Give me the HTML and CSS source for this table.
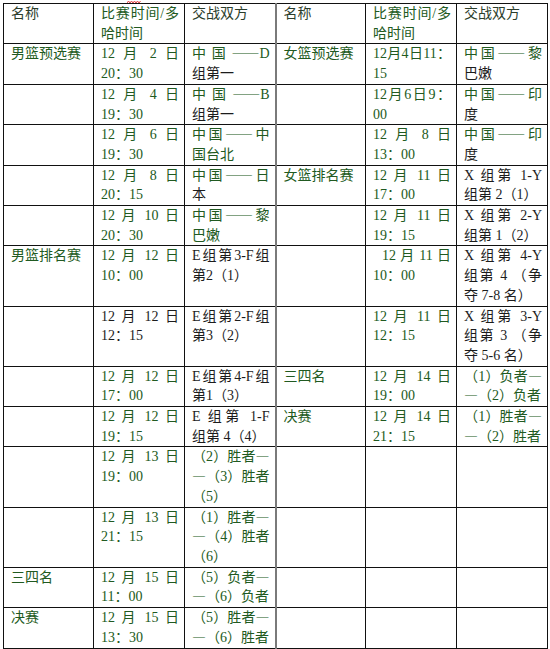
FILE: index.html
```html
<!DOCTYPE html>
<html lang="zh-CN">
<head>
<meta charset="utf-8">
<title>赛程表</title>
<link rel="stylesheet" href="styles.css">
</head>
<body>
<svg class="squiggle" width="14" height="4" viewBox="0 0 14 4"><polyline points="0,3 1.5,1 3,3 4.5,1 6,3 7.5,1 9,3 10.5,1 12,3 13.5,1" fill="none" stroke="#e03030" stroke-width="0.9"/></svg>
<table class="sched">
<colgroup><col class="cw90"><col class="cw91"><col class="cw91"><col class="cw90"><col class="cw91"><col class="cw91"></colgroup>
<tr class="hd">
<td>名称</td><td class="g">比赛时间/多哈时间</td><td>交战双方</td>
<td class="mid">名称</td><td class="g">比赛时间/多哈时间</td><td>交战双方</td>
</tr>
<tr>
<td class="g">男篮预选赛</td><td class="g">12 月 2 日 20：30</td><td><span class="g">中国<span class="d">——</span>D</span>组第一</td>
<td class="mid g">女篮预选赛</td><td class="g">12月4日11：15</td><td><span class="g">中国<span class="d">——</span>黎</span>巴嫩</td>
</tr>
<tr>
<td></td><td class="g">12 月 4 日 19：30</td><td><span class="g">中国<span class="d">——</span>B</span>组第一</td>
<td class="mid"></td><td class="g">12月6日9：00</td><td><span class="g">中国<span class="d">——</span>印</span>度</td>
</tr>
<tr>
<td></td><td class="g">12 月 6 日 19：30</td><td class="g">中国<span class="d">——</span>中国台北</td>
<td class="mid"></td><td class="g">12 月 8 日 13：00</td><td><span class="g">中国<span class="d">——</span>印</span>度</td>
</tr>
<tr>
<td></td><td class="g">12 月 8 日 20：15</td><td><span class="g">中国<span class="d">——</span>日</span>本</td>
<td class="mid g">女篮排名赛</td><td class="g">12 月 11 日 17：00</td><td>X 组第 1-Y 组第 2（1）</td>
</tr>
<tr>
<td></td><td class="g">12 月 10 日 20：30</td><td class="g">中国<span class="d">——</span>黎巴嫩</td>
<td class="mid"></td><td class="g">12 月 11 日 19：15</td><td>X 组第 2-Y 组第 1（2）</td>
</tr>
<tr>
<td class="g">男篮排名赛</td><td class="g">12 月 12 日 10：00</td><td>E组第3-F组第2（1）</td>
<td class="mid"></td><td class="g indent">12 月 11 日 10：00</td><td>X 组第 4-Y 组第 4 （争夺 7-8 名）</td>
</tr>
<tr>
<td></td><td>12 月 12 日 12：15</td><td>E组第2-F组第3（2）</td>
<td class="mid"></td><td class="g">12 月 11 日 12：15</td><td>X 组第 3-Y 组第 3 （争夺 5-6 名）</td>
</tr>
<tr>
<td></td><td class="g">12 月 12 日 17：00</td><td>E组第4-F组第1（3）</td>
<td class="mid g">三四名</td><td class="g">12 月 14 日 19：00</td><td class="g">（1）负者<span class="d">—<wbr>—</span>（2）负者</td>
</tr>
<tr>
<td></td><td class="g">12 月 12 日 19：15</td><td>E 组第 1-F 组第 4（4）</td>
<td class="mid g">决赛</td><td class="g">12 月 14 日 21：15</td><td class="g">（1）胜者<span class="d">—<wbr>—</span>（2）胜者</td>
</tr>
<tr>
<td></td><td class="g">12 月 13 日 19：00</td><td class="g">（2）胜者<span class="d">—<wbr>—</span>（3）胜者（5）</td>
<td class="mid"></td><td></td><td></td>
</tr>
<tr>
<td></td><td class="g">12 月 13 日 21：15</td><td class="g">（1）胜者<span class="d">—<wbr>—</span>（4）胜者（6）</td>
<td class="mid"></td><td></td><td></td>
</tr>
<tr>
<td class="g">三四名</td><td class="g">12 月 15 日 11：00</td><td class="g">（5）负者<span class="d">—<wbr>—</span>（6）负者</td>
<td class="mid"></td><td></td><td></td>
</tr>
<tr>
<td class="g">决赛</td><td class="g">12 月 15 日 13：30</td><td class="g">（5）胜者<span class="d">—<wbr>—</span>（6）胜者</td>
<td class="mid"></td><td></td><td></td>
</tr>
</table>
</body>
</html>
```

FILE: styles.css
```css
html, body {
  margin: 0;
  padding: 0;
  background: #ffffff;
}

body {
  position: relative;
  font-family: "Liberation Serif", "Noto Sans CJK SC", serif;
  font-size: 14px;
  color: #1c1c1c;
}

.squiggle {
  position: absolute;
  left: 127px;
  top: 0;
}

.sched {
  border-collapse: collapse;
  table-layout: fixed;
  width: 544px;
  margin: 3px 0 0 3px;
}

.cw90 { width: 90px; }
.cw91 { width: 91px; }

.sched td {
  border: 1px solid #111111;
  padding: 0 5px 0 7px;
  vertical-align: top;
  text-align: justify;
  line-height: 19.7px;
}

.sched td.mid {
  border-left: 2px solid #7a7a7a;
}

.g {
  color: #215a21;
}

.hd td {
  color: #2b3d2b;
}

.hd td.g {
  color: #215a21;
}

.d {
  font-family: "Noto Sans CJK SC", sans-serif;
  line-height: 12px;
}

.indent {
  text-indent: 9px;
}
```
